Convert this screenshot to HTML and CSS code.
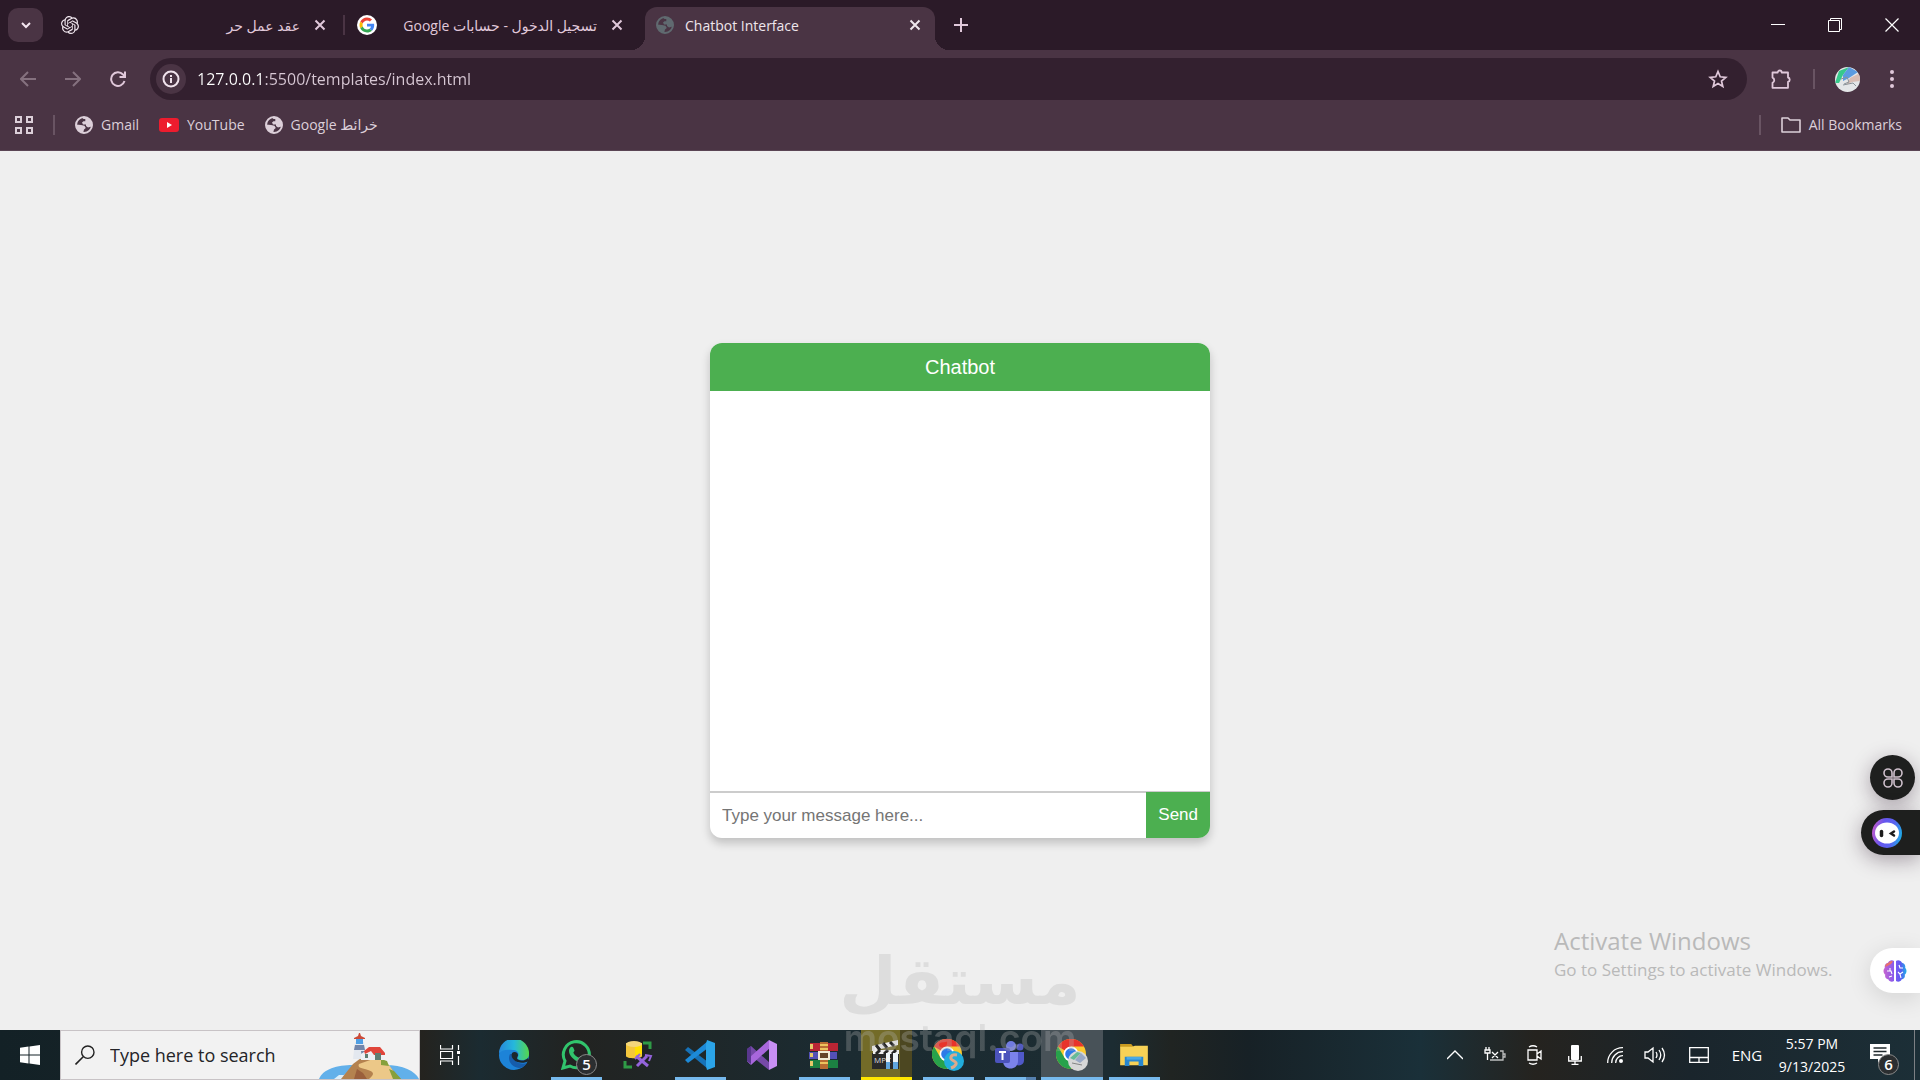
FILE: index.html
```
<!DOCTYPE html>
<html lang="en">
  <head>
    <meta charset="UTF-8" />
    <meta name="viewport" content="width=device-width, initial-scale=1.0" />
    <title>Chatbot Interface</title>
    <link rel="stylesheet" href="styles.css">
  </head>
  <body>
    <!-- shared symbols -->
    <svg class="defs" aria-hidden="true">
      <symbol id="close" viewBox="0 0 12 12">
        <path d="M1.5 1.5l9 9M10.5 1.5l-9 9" fill="none" stroke="currentColor" stroke-width="2" />
      </symbol>
      <symbol id="globe" viewBox="0 0 18 18">
        <circle cx="9" cy="9" r="8" fill="none" stroke="currentColor" stroke-width="2" />
        <path d="M8.500 1h3l5 4.500v5l-3.500 1-2-1.500V8.500H8L7 6.500l1.500-1.200h1.800V3H8zM1.200 8.500l4.800.5 3.500.8 1.300 2.200-1.800 1.500-.8 3.300L4 15.500 1 11z" fill="currentColor" />
      </symbol>
      <symbol id="chrome" viewBox="0 0 30 30">
        <circle cx="15" cy="15" r="15" fill="#fbc92e" />
        <path d="M15 15L2 7.500A15 15 0 0 1 28 7.500H15z" fill="#e8342b" />
        <path d="M2 7.500A15 15 0 0 0 15 30l6.500-11.200L8.500 18.800z" fill="#27a24b" />
        <circle cx="15" cy="15" r="7.500" fill="#fff" />
        <circle cx="15" cy="15" r="5.800" fill="#2d7be8" />
      </symbol>
    </svg>

    <header class="browser">
      <div class="tab-strip">
        <button class="tab-search" aria-label="Search tabs">
          <svg viewBox="0 0 12 12" width="12" height="12"><path d="M2 4l4 4 4-4" fill="none" stroke="currentColor" stroke-width="2" /></svg>
        </button>
        <div class="tab tab-first">
          <svg class="favicon" viewBox="0 0 24 24"><path fill="#f0e6ee" d="M22.2819 9.8211a5.9847 5.9847 0 0 0-.5157-4.9108 6.0462 6.0462 0 0 0-6.5098-2.9A6.0651 6.0651 0 0 0 4.9807 4.1818a5.9847 5.9847 0 0 0-3.9977 2.9 6.0462 6.0462 0 0 0 .7427 7.0966 5.98 5.98 0 0 0 .511 4.9107 6.051 6.051 0 0 0 6.5146 2.9001A5.9847 5.9847 0 0 0 13.2599 24a6.0557 6.0557 0 0 0 5.7718-4.2058 5.9894 5.9894 0 0 0 3.9977-2.9001 6.0557 6.0557 0 0 0-.7475-7.0729zm-9.022 12.6081a4.4755 4.4755 0 0 1-2.8764-1.0408l.1419-.0804 4.7783-2.7582a.7948.7948 0 0 0 .3927-.6813v-6.7369l2.02 1.1686a.071.071 0 0 1 .038.052v5.5826a4.504 4.504 0 0 1-4.4945 4.4944zm-9.6607-4.1254a4.4708 4.4708 0 0 1-.5346-3.0137l.142.0852 4.783 2.7582a.7712.7712 0 0 0 .7806 0l5.8428-3.3685v2.3324a.0804.0804 0 0 1-.0332.0615L9.74 19.9502a4.4992 4.4992 0 0 1-6.1408-1.6464zM2.3408 7.8956a4.485 4.485 0 0 1 2.3655-1.9728V11.6a.7664.7664 0 0 0 .3879.6765l5.8144 3.3543-2.0201 1.1685a.0757.0757 0 0 1-.071 0l-4.8303-2.7865A4.504 4.504 0 0 1 2.3408 7.872zm16.5963 3.8558L13.1038 8.364 15.1192 7.2a.0757.0757 0 0 1 .071 0l4.8303 2.7913a4.4944 4.4944 0 0 1-.6765 8.1042v-5.6772a.79.79 0 0 0-.407-.667zm2.0107-3.0231l-.142-.0852-4.7735-2.7818a.7759.7759 0 0 0-.7854 0L9.409 9.2297V6.8974a.0662.0662 0 0 1 .0284-.0615l4.8303-2.7866a4.4992 4.4992 0 0 1 6.6802 4.66zM8.3065 12.863l-2.02-1.1638a.0804.0804 0 0 1-.038-.0567V6.0742a4.4992 4.4992 0 0 1 7.3757-3.4537l-.142.0805L8.704 5.459a.7948.7948 0 0 0-.3927.6813zm1.0976-2.3654l2.602-1.4998 2.6069 1.4998v2.9994l-2.5974 1.4997-2.6067-1.4997Z" /></svg>
          <span class="tab-title" dir="rtl">عقد عمل حر</span>
          <button class="tab-close" aria-label="Close tab"><svg width="12" height="12"><use href="#close" /></svg></button>
        </div>
        <div class="tab tab-second">
          <svg class="favicon favicon-google" viewBox="-8 -8 64 64"><circle cx="24" cy="24" r="32" fill="#fff" /><path fill="#ea4335" d="M24 9.500c3.540 0 6.710 1.220 9.210 3.600l6.850-6.850C35.900 2.380 30.470 0 24 0 14.620 0 6.510 5.380 2.560 13.220l7.980 6.190C12.430 13.720 17.740 9.500 24 9.500z" /><path fill="#4285f4" d="M46.980 24.550c0-1.570-.15-3.090-.38-4.550H24v9.020h12.940c-.58 2.960-2.260 5.480-4.780 7.180l7.730 6c4.510-4.180 7.090-10.360 7.090-17.650z" /><path fill="#fbbc05" d="M10.530 28.590c-.48-1.450-.76-2.990-.76-4.590s.27-3.140.76-4.590l-7.980-6.190C.92 16.460 0 20.120 0 24c0 3.880.92 7.540 2.560 10.780l7.970-6.190z" /><path fill="#34a853" d="M24 48c6.480 0 11.930-2.130 15.890-5.810l-7.730-6c-2.150 1.450-4.920 2.300-8.160 2.300-6.260 0-11.570-4.220-13.470-9.910l-7.980 6.190C6.510 42.620 14.620 48 24 48z" /></svg>
          <span class="tab-title" dir="rtl">تسجيل الدخول - حسابات Google</span>
          <button class="tab-close" aria-label="Close tab"><svg width="12" height="12"><use href="#close" /></svg></button>
        </div>
        <div class="tab tab-active">
          <svg class="favicon favicon-dim"><use href="#globe" /></svg>
          <span class="tab-title">Chatbot Interface</span>
          <button class="tab-close" aria-label="Close tab"><svg width="12" height="12"><use href="#close" /></svg></button>
        </div>
        <button class="new-tab" aria-label="New tab">
          <svg viewBox="0 0 14 14" width="14" height="14"><path d="M7 0v14M0 7h14" stroke="currentColor" stroke-width="2" /></svg>
        </button>
        <div class="window-controls">
          <button aria-label="Minimize"><svg viewBox="0 0 14 14" width="14" height="14"><path d="M0 6.500h14" stroke="#fff" /></svg></button>
          <button aria-label="Restore"><svg viewBox="0 0 14 14" width="14" height="14"><path d="M.5 2.500h11v11H.5zM2.500 2.500v-2h11v11h-2" fill="none" stroke="#fff" /></svg></button>
          <button aria-label="Close"><svg viewBox="0 0 14 14" width="14" height="14"><path d="M.5.5l13 13M13.500.5l-13 13" stroke="#fff" stroke-width="1.200" /></svg></button>
        </div>
      </div>

      <div class="toolbar">
        <button class="nav-button disabled" aria-label="Back"><svg viewBox="0 0 16 16" width="16" height="16"><path d="M16 8H1.500M8 1L1 8l7 7" /></svg></button>
        <button class="nav-button disabled" aria-label="Forward"><svg viewBox="0 0 16 16" width="16" height="16"><path d="M0 8h14.500M8 1l7 7-7 7" /></svg></button>
        <button class="nav-button" aria-label="Reload"><svg viewBox="0 0 16 16" width="16" height="16"><path d="M14.500 10A6.800 6.800 0 1 1 13 3.500L15 6M15 .5V6H9.500" /></svg></button>
        <div class="omnibox">
          <button class="site-info" aria-label="Site information"><svg viewBox="0 0 18 18" width="18" height="18"><circle cx="9" cy="9" r="7.500" fill="none" stroke="currentColor" stroke-width="2" /><path d="M9 8v5M9 5v2" stroke="currentColor" stroke-width="2" /></svg></button>
          <input class="url" type="text" aria-label="Address" value="127.0.0.1:5500/templates/index.html" />
          <button class="star" aria-label="Bookmark this tab"><svg viewBox="0 0 20 20" width="20" height="20"><path d="M10 2.500l2.200 5.300 5.600.5-4.300 3.700 1.300 5.500-4.800-3-4.800 3 1.300-5.500-4.300-3.700 5.600-.5z" fill="none" stroke="currentColor" stroke-width="1.700" /></svg></button>
        </div>
        <button class="extensions" aria-label="Extensions"><svg viewBox="0 0 22 22" width="22" height="22"><path d="M2.500 4.500h5.200a2 2 0 0 1 4 0h6.300v5a2.200 2.200 0 0 1 0 4.300v6H2.500v-5a2.800 2.800 0 0 0 0-5.200z" fill="none" stroke="currentColor" stroke-width="1.800" stroke-linejoin="round" /></svg></button>
        <span class="divider"></span>
        <button class="profile" aria-label="Profile">
          <svg viewBox="0 0 25 25" width="25" height="25">
            <clipPath id="avatar"><circle cx="12.500" cy="12.500" r="12.500" /></clipPath>
            <g clip-path="url(#avatar)">
              <path d="M0 0h25v25H0z" fill="#e4e6e8" />
              <path d="M0 16L4 4l10-4L8 8l-4 8z" fill="#36c98b" />
              <path d="M8 8l6-8 9 5-9 6-6 3z" fill="#5b9be0" />
              <path d="M11 18l4-7 10-5v8l-8 1z" fill="#d9bdb4" />
              <path d="M6 12l6-2 2 5-5 2M8 18l10-2 3 3" fill="none" stroke="#8b9399" />
            </g>
          </svg>
        </button>
        <button class="menu" aria-label="Menu"><svg viewBox="0 0 4 18" width="4" height="18"><circle cx="2" cy="2" r="2" /><circle cx="2" cy="9" r="2" /><circle cx="2" cy="16" r="2" /></svg></button>
      </div>

      <nav class="bookmarks">
        <button class="apps" aria-label="Apps"><svg viewBox="0 0 18 18" width="18" height="18"><path d="M1 1h5v5H1zM12 1h5v5h-5zM1 12h5v5H1zM12 12h5v5h-5z" fill="none" stroke="currentColor" stroke-width="2" /></svg></button>
        <span class="divider"></span>
        <a href="#"><svg class="favicon"><use href="#globe" /></svg>Gmail</a>
        <a href="#"><svg viewBox="0 0 20 14" width="20" height="14"><rect width="20" height="14" rx="3" fill="#ed1c2e" /><path d="M8 4l5 3-5 3z" fill="#fff" /></svg>YouTube</a>
        <a href="#"><svg class="favicon"><use href="#globe" /></svg><span dir="rtl">خرائط Google</span></a>
        <div class="all-bookmarks">
          <span class="divider"></span>
          <a href="#"><svg viewBox="0 0 20 16" width="20" height="16"><path d="M1 1h6l2 2h10v12H1z" fill="none" stroke="currentColor" stroke-width="1.600" stroke-linejoin="round" /></svg>All Bookmarks</a>
        </div>
      </nav>
    </header>

    <main class="page">
      <div class="chat-container">
        <div class="chat-header">Chatbot</div>
        <div class="chat-box" id="chatBox"></div>
        <form class="chat-input">
          <input type="text" id="userInput" aria-label="Message" placeholder="Type your message here..." />
          <button type="submit">Send</button>
        </form>
      </div>

      <div class="activate">
        <p class="activate-title">Activate Windows</p>
        <p>Go to Settings to activate Windows.</p>
      </div>

      <div class="side-tools">
        <button class="side-round" aria-label="Tools"><svg viewBox="0 0 20 20" width="20" height="20"><path d="M9 9H5a4 4 0 1 1 4-4zM11 9V5a4 4 0 1 1 4 4zM9 11v4a4 4 0 1 1-4-4zM11 11h4a4 4 0 1 1-4 4z" fill="none" stroke="#cfc0cc" stroke-width="1.600" /></svg></button>
        <button class="side-pill" aria-label="Assistant">
          <svg viewBox="0 0 30 30" width="30" height="30">
            <linearGradient id="ring" x1="0" y1=".6" x2="1" y2=".8"><stop offset="0" stop-color="#b65bd0" /><stop offset=".3" stop-color="#6656ee" /><stop offset=".65" stop-color="#5863f0" /><stop offset="1" stop-color="#14b9e8" /></linearGradient>
            <circle cx="15" cy="15" r="15" fill="url(#ring)" />
            <ellipse cx="15" cy="15" rx="12" ry="10.500" fill="#fff" />
            <path d="M9.500 13.500v4" stroke="#1c1c1c" stroke-width="3.500" stroke-linecap="round" />
            <path d="M22 13.500l-3 2 3 2" fill="none" stroke="#1c1c1c" stroke-width="2.500" stroke-linecap="round" />
          </svg>
        </button>
      </div>
      <button class="brain" aria-label="Brain">
        <svg viewBox="0 0 24 22" width="24" height="22">
          <linearGradient id="mind"><stop offset="0" stop-color="#c764cf" /><stop offset=".5" stop-color="#8058f0" /><stop offset=".75" stop-color="#5b5bf0" /><stop offset="1" stop-color="#1eb2e8" /></linearGradient>
          <path d="M11 1v20c-2 1.500-5 .5-5.500-1.500C3 19 1.500 17 2.300 14.800 0 13 0 9.500 1.800 8 1.200 5 3 3 5 2.800 6 0 9.500-.5 11 1zM13 1v20c2 1.500 5 .5 5.500-1.500 2.500-.5 4-2.500 3.200-4.700 2.300-1.800 2.300-5.300.5-6.800.6-3-1.200-5-3.200-5.200C18 0 14.500-.5 13 1z" fill="url(#mind)" />
          <path d="M2.500 7C2 4.500 3.500 3.200 5.500 3 6.500 1 9 .3 10 1.500L8 4z" fill="#e8716a" />
          <path d="M4 11h4l1 3M7 8v3M16 5l1 3h3M15 12l2 2 1 4M17 14l3-2M6 17l3-1" fill="none" stroke="#fff" stroke-width="1.100" />
        </svg>
      </button>
    </main>

    <footer class="taskbar">
      <button class="start" aria-label="Start"><svg viewBox="0 0 20 20" width="20" height="20"><path d="M0 2.800l8.500-1.200v7.900H0zM9.500 1.500L20 0v9.500H9.500zM0 10.500h8.500v7.900L0 17.200zM9.500 10.500H20V20L9.500 18.500z" fill="#fff" /></svg></button>
      <div class="search">
        <svg viewBox="0 0 20 20" width="20" height="20"><circle cx="12.800" cy="7.200" r="6.200" fill="none" stroke="#222" stroke-width="1.400" /><path d="M8.200 11.800L.5 19.500" stroke="#222" stroke-width="1.600" /></svg>
        <input type="text" aria-label="Search" placeholder="Type here to search" />
        <svg class="lighthouse" viewBox="0 0 100 46" width="100" height="46">
          <path d="M0 46C4 36 18 32 34 32h32c18 0 30 6 34 14z" fill="#62b0ea" />
          <path d="M15 46l5-4h5l6-4 6 3v5z" fill="#dceefa" />
          <path d="M22 46L34 31l8-6h18l8 6 14 15z" fill="#b4824f" />
          <path d="M40 31l14-5h10l6 6 10 14H50c6-5 5-7-1-9s-11-2-9-6z" fill="#ecc888" />
          <path d="M62 26l6 2 2 5-8-1zM70 36l5 2 7 8h-8z" fill="#86a03c" />
          <path d="M35 46l3-10 6 4 4 6z" fill="#9a5f3c" />
          <path d="M36 9h9l2 17H34z" fill="#e3e8ef" />
          <path d="M36 12h9l1 5H35zM42 18h4l1 8h-4z" fill="#7386aa" />
          <path d="M35 5l4-2 1-3h1l1 3 4 2v1H35z" fill="#cb4b38" />
          <path d="M37 6h7v5h-7z" fill="#4f9fe4" />
          <path d="M42 21l6-4h12l5 5v5H42z" fill="#eef0f4" />
          <path d="M45 18l5-4h11l5 6v2H55l-3-4-6 3z" fill="#e0453a" />
          <path d="M56 20h6v7h-6zM46 21h3v4h-3z" fill="#5f7d72" />
        </svg>
      </div>
      <button class="task task-view" aria-label="Task View"><svg viewBox="0 0 20 20" width="20" height="20"><path d="M.5 0v4h12V0M.5 20v-4h12v4M.5 6.500h12v7H.5zM18.500 0v5M18.500 11v9" fill="none" stroke="#fff" stroke-width="1.200" /><path d="M17 6h3v3h-3z" fill="#fff" /></svg></button>

      <div class="apps-list">
        <button class="task" aria-label="Edge">
          <svg viewBox="0 0 30 30" width="30" height="30">
            <linearGradient id="edge-top"><stop offset="0" stop-color="#2788dc" /><stop offset=".5" stop-color="#25b8dc" /><stop offset="1" stop-color="#55d74c" /></linearGradient>
            <circle cx="15" cy="15" r="15" fill="#1d83d8" />
            <path d="M11 14c-3 6 1 13 9 14 3 0 6-2 8-5-3 1-7 1-10-1-4-2-5-5-4-8z" fill="#165cab" />
            <path d="M0 13A15 15 0 0 1 30 14c0 4-3 6-7 6-5 0-5-1.500-4-3 2-4-1-7-5-7C7 9 3 10 0 13z" fill="url(#edge-top)" />
            <path d="M13 13c2-2 6-1 6 2 0 2-2 3 0 4.500 3 2 8 1 10-1.500l1 3c-5 3-12 2-15-1-2-2-3-4-2-7z" fill="#1d262c" />
          </svg>
        </button>
        <button class="task running" aria-label="WhatsApp">
          <svg viewBox="0 0 30 30" width="30" height="30"><path d="M2 28l2-7A13 13 0 1 1 9 26z" fill="none" stroke="#31c46c" stroke-width="3" /><path d="M10 7c1-.5 2 0 2.500 1l1 2.500c0 1-1.500 1.500-1 2.500 1 2 3 4 5 4.500 1 0 1.500-1.500 2.500-1.500l3 1.500c1 2-1.500 4.500-4 4.500C13.500 21.500 7.500 15 8 10.500 8 9 9 7.500 10 7z" fill="#31c46c" /></svg>
          <span class="badge">5</span>
        </button>
        <button class="task" aria-label="Database tools">
          <svg viewBox="0 0 30 30" width="30" height="30"><path d="M20 3h7v6M2 21v6h7" fill="none" stroke="#2f9b46" stroke-width="3" /><path d="M3 3v13c0 3 16 3 16 0V3z" fill="#f4c73d" /><path d="M12 5h7v9l-7 4z" fill="#ffe000" /><ellipse cx="11" cy="4" rx="8" ry="3" fill="#f4d77c" /><path d="M14 26l10-10M13 16l12 10" stroke="#9464dc" stroke-width="3" /><path d="M22 15l6 1-2 5M12 19l5-5" fill="none" stroke="#9464dc" stroke-width="2" /></svg>
        </button>
        <button class="task running" aria-label="Visual Studio Code">
          <svg viewBox="0 0 30 30" width="30" height="30"><path d="M0 10l3-3 20 15v7z" fill="#1672b8" /><path d="M0 20l3 3L23 8V1z" fill="#1c8ad8" /><path d="M22 0l8 3v24l-8 3-1-4V4z" fill="#2ba4e8" /></svg>
        </button>
        <button class="task" aria-label="Visual Studio">
          <svg viewBox="0 0 30 30" width="30" height="30"><path d="M0 9l4-3 19 17-1 7L3 15v9l-3-3z" fill="#7649a8" /><path d="M0 21l4 4L23 8l-1-8L3 17z" fill="#a867dc" /><path d="M22 0l8 4v22l-8 4z" fill="#c88ff4" /><path d="M0 9l4-3v18l-4-3z" fill="#59378e" /></svg>
        </button>
        <button class="task running" aria-label="WinRAR">
          <svg viewBox="0 0 30 27" width="30" height="27"><path d="M1 1h28v8H1z" fill="#b92534" /><path d="M0 10h28v7H0z" fill="#5350b5" /><path d="M1 18h28v8H1z" fill="#1c8142" /><path d="M1 2h3v5H1zM1 11h3v4H1zM1 19h3v5H1z" fill="#e6c86a" /><path d="M11 0h8v27h-8z" fill="#b96c32" /><path d="M11 3h8M11 7h8M11 21h8" stroke="#ecc25d" stroke-width="2" /><path d="M10 10h10v7H10z" fill="#654328" stroke="#f1ead4" stroke-width="2" /></svg>
        </button>
        <button class="task attention" aria-label="Media player">
          <svg viewBox="0 0 30 30" width="30" height="30"><path d="M1 13h27v16H1z" fill="#292929" /><path d="M1 6L27 0v5L1 11zM2 10h26v4H2z" fill="#eee" /><path d="M5 5l4 5M12 3l4 5M19 2l4 4M5 14l4-4M13 14l4-4M21 14l4-4" stroke="#262626" stroke-width="3" /><text x="3" y="23" fill="#ddd" font-size="8">MPC</text><path d="M15 13h4v15h-4zM22 13h5v15h-5z" fill="#eef4f7" /><path d="M15 22h4v7h-4zM22 22h5v7h-5z" fill="#61a6dd" /></svg>
        </button>
        <button class="task running" aria-label="Chrome, profile S">
          <svg viewBox="0 0 32 32" width="32" height="32"><use href="#chrome" width="30" height="30" /><circle cx="22" cy="22" r="10" fill="#22addc" /><path d="M25 16c-7-1-8 4-3 6 4 2 2 5-3 7" fill="none" stroke="#dbaa8c" stroke-width="3" /></svg>
        </button>
        <button class="task running grouped" aria-label="Teams">
          <svg viewBox="0 0 30 28" width="30" height="28"><circle cx="16" cy="5" r="5" fill="#717be0" /><circle cx="25" cy="6" r="3.500" fill="#535bc0" /><path d="M20 11h9v8c0 5-5 7-9 4z" fill="#5059c9" /><path d="M8 11h15v9c0 10-15 10-15 0z" fill="#7b83eb" /><rect y="7" width="15" height="15" rx="2" fill="#4b53bc" /><path d="M4 11h7M7.500 11v8" stroke="#fff" stroke-width="2" /></svg>
        </button>
        <button class="task running current" aria-label="Chrome">
          <svg viewBox="0 0 32 32" width="32" height="32"><use href="#chrome" width="30" height="30" /><circle cx="22" cy="22" r="10" fill="#d7d7d7" /><path d="M14 19l7-6 4 1-7 7z" fill="#65bb98" /><path d="M19 21l6-7 5 5-6 5z" fill="#98a8c5" /><path d="M16 24l10 2" stroke="#858585" /></svg>
        </button>
        <button class="task running" aria-label="File Explorer">
          <svg viewBox="0 0 30 26" width="28" height="24"><path d="M0 1h12l3 4H0z" fill="#c99a20" /><path d="M0 4h13l3-1h14v21H0z" fill="#f7d156" /><path d="M5 15h20v10h-5v-5h-10v5H5z" fill="#2887cf" /><path d="M7 15h16v3H7z" fill="#49a9e6" /></svg>
        </button>
      </div>

      <div class="tray">
        <button aria-label="Show hidden icons"><svg viewBox="0 0 16 10" width="16" height="10"><path d="M0 9l8-8 8 8" /></svg></button>
        <button aria-label="Battery"><svg viewBox="0 0 22 16" width="22" height="16"><path d="M16 4h3v9H6M19 7h2v3h-2" opacity=".7" /><path d="M2 0v3M5 0v3M1 3h5v3H1zM3.500 6v7M8 5l6 6M14 5l-6 6" /></svg></button>
        <button aria-label="Meet now"><svg viewBox="0 0 16 20" width="16" height="20"><path d="M1 5h9v10H1zM10 9l4-3v8l-4-3M2 2q4-2.500 8 0M2 18q4 2.500 8 0" /></svg></button>
        <button aria-label="Microphone"><svg viewBox="0 0 14 20" width="14" height="20"><rect x="3" width="8" height="15" rx="1" fill="#fff" /><path d="M.7 11v5h12.600v-5M7 16v3M3.500 19.300h7" /></svg></button>
        <button aria-label="Wi-Fi"><svg viewBox="0 0 16 16" width="16" height="16"><path d="M.7 16A15 15 0 0 1 16 .7M4.700 16A11 11 0 0 1 16 4.700M8.700 16A7 7 0 0 1 16 8.700" /><circle cx="14" cy="14" r="2" fill="#fff" stroke="none" /></svg></button>
        <button aria-label="Volume"><svg viewBox="0 0 22 18" width="22" height="18"><path d="M1 6h3l5-4v14l-5-4H1zM12 6q2 3 0 6M15 4q3.500 5 0 10M18 2q5 7 0 14" /></svg></button>
        <button aria-label="Touchpad"><svg viewBox="0 0 20 16" width="20" height="16"><path d="M.7.7h18.600v14.600H.7zM.7 10.500h18.600M10 10.500v5" /></svg></button>
        <button>ENG</button>
        <button class="clock"><span>5:57 PM</span><span>9/13/2025</span></button>
        <button class="notices" aria-label="Notifications"><svg viewBox="0 0 20 20" width="20" height="20"><path d="M0 0h20v15h-8l-4 4v-4H0z" class="bubble" /><path d="M3.500 4h13M3.500 7.500h13M3.500 11h9" class="dark-line" /></svg><span class="badge">6</span></button>
      </div>
    </footer>

    <div class="watermark" aria-hidden="true">
      <span class="watermark-ar" lang="ar" dir="rtl">مستقل</span>
      <span class="watermark-en">mostaql.com</span>
    </div>
  </body>
</html>
```

FILE: styles.css
```
* {
  box-sizing: border-box;
}
body {
  margin: 0;
  height: 100vh;
  display: flex;
  flex-direction: column;
  position: relative;
  overflow: hidden;
  font-family: "Open Sans", "DejaVu Sans", sans-serif;
  background-color: #efefef;
}
button,
input {
  font-family: inherit;
  border: none;
  outline: none;
  padding: 0;
  background: none;
  color: inherit;
}
button {
  display: flex;
  align-items: center;
  justify-content: center;
  flex-shrink: 0;
  cursor: pointer;
}
a {
  color: inherit;
  text-decoration: none;
}
svg {
  flex-shrink: 0;
}
.defs {
  position: absolute;
  width: 0;
  height: 0;
}

/* browser window */
.browser {
  background-color: #4a3444;
  color: #e0c8da;
  border-bottom: 1px solid #5a4554;
}
.tab-strip {
  height: 50px;
  display: flex;
  align-items: center;
  background-color: #2b1a28;
  padding-left: 8px;
}
.tab-search {
  width: 35px;
  height: 34px;
  border-radius: 10px;
  background-color: #4a3444;
  color: #f4e6f0;
}
.tab {
  display: flex;
  align-items: center;
  height: 30px;
  font-size: 14px;
  gap: 14px;
}
.tab-title {
  flex: 1;
  min-width: 0;
  white-space: nowrap;
}
.tab-first {
  width: 284px;
  height: 20px;
  margin-left: 18px;
  padding-right: 17px;
  border-right: 2px solid #4a3444;
}
.tab-second {
  width: 300px;
  padding: 0 22px 0 12px;
}
.tab-active {
  position: relative;
  align-self: flex-end;
  width: 290px;
  height: 43px;
  padding: 0 14px 7px 11px;
  gap: 11px;
  border-radius: 12px 12px 0 0;
  background-color: #4a3444;
  color: #eee6ec;
}
.tab-active::before,
.tab-active::after {
  content: "";
  position: absolute;
  bottom: 0;
  width: 14px;
  height: 14px;
}
.tab-active::before {
  right: 100%;
  background: radial-gradient(circle at 0 0, transparent 14px, #4a3444 14px);
}
.tab-active::after {
  left: 100%;
  background: radial-gradient(circle at 100% 0, transparent 14px, #4a3444 14px);
}
.favicon {
  width: 18px;
  height: 18px;
}
.favicon-google {
  width: 20px;
  height: 20px;
}
.favicon-dim {
  color: #606a70;
}
.new-tab {
  width: 34px;
  height: 34px;
  margin-left: 9px;
}
.window-controls {
  display: flex;
  margin-left: auto;
}
.window-controls button {
  width: 57px;
  height: 50px;
}
.toolbar {
  display: flex;
  align-items: center;
  padding: 8px 14px 0 5px;
}
.nav-button {
  width: 45px;
  height: 42px;
}
.nav-button path {
  fill: none;
  stroke: currentColor;
  stroke-width: 2;
}
.disabled {
  color: #85717f;
}
.omnibox {
  flex: 1;
  display: flex;
  align-items: center;
  height: 42px;
  margin-left: 10px;
  padding: 0 19px 0 6px;
  border-radius: 21px;
  background-color: #33202f;
}
.site-info {
  width: 30px;
  height: 30px;
  border-radius: 50%;
  background-color: #4a3444;
  color: #f0e2ec;
}
/* host part is brighter than the path */
.url {
  flex: 1;
  margin-left: 11px;
  font-size: 16px;
  color: transparent;
  background: linear-gradient(to right, #fff 67px, #d8c8d5 67px);
  background-clip: text;
  -webkit-background-clip: text;
}
.extensions {
  width: 34px;
  margin-left: 17px;
}
.divider {
  width: 2px;
  height: 20px;
  background-color: #695463;
}
.toolbar .divider {
  margin-left: 15px;
}
.profile {
  width: 25px;
  margin-left: 20px;
}
.menu {
  width: 28px;
  margin-left: 18px;
}
.menu circle {
  fill: currentColor;
}
.bookmarks {
  display: flex;
  align-items: center;
  height: 50px;
  padding: 0 18px 0 15px;
  gap: 20px;
  font-size: 14px;
  line-height: 18px;
  color: #dccfd9;
}
.bookmarks a {
  display: flex;
  align-items: center;
  gap: 8px;
}
.all-bookmarks {
  display: flex;
  align-items: center;
  gap: 20px;
  margin-left: auto;
}

/* chat page */
.page {
  flex: 1;
  min-height: 0;
  position: relative;
  display: flex;
  align-items: center;
  justify-content: center;
  background-color: #efefef;
  font-family: Arial, "Liberation Sans", sans-serif;
}
.chat-container {
  width: 500px;
  border-radius: 12px;
  overflow: hidden;
  background-color: #fff;
  box-shadow: 0 5px 10px rgba(0, 0, 0, 0.2);
}
.chat-header {
  padding: 12px;
  font-size: 20px;
  line-height: 24px;
  text-align: center;
  background-color: #4caf50;
  color: #fff;
}
.chat-box {
  height: 400px;
}
.chat-input {
  display: flex;
  height: 47px;
  border-top: 1px solid #ccc;
}
.chat-input input {
  flex: 1;
  padding: 0 12px;
  font-size: 17px;
  border-top: 1px solid #ccc;
}
.chat-input input::placeholder {
  color: #757575;
}
.chat-input button {
  padding: 0 12px;
  font-size: 17px;
  background-color: #4caf50;
  color: #fff;
}
.activate {
  position: absolute;
  right: 81px;
  bottom: 48px;
  width: 285px;
  font-family: "Open Sans", sans-serif;
  font-size: 17px;
  line-height: 24px;
  white-space: nowrap;
  color: #b9b9b9;
}
.activate p {
  margin: 0;
}
.activate .activate-title {
  font-size: 24px;
  line-height: 34px;
}
.side-tools {
  position: absolute;
  right: 0;
  bottom: 175px;
  display: flex;
  flex-direction: column;
  align-items: flex-end;
  gap: 10px;
}
.side-round,
.side-pill {
  height: 45px;
  background-color: #1e1f1e;
  box-shadow: 0 5px 20px rgba(60, 40, 60, 0.4);
}
.side-round {
  width: 45px;
  margin-right: 5px;
  border-radius: 50%;
}
.side-pill {
  width: 59px;
  padding-right: 7px;
  border-radius: 23px 0 0 23px;
}
.brain {
  position: absolute;
  right: 0;
  bottom: 37px;
  width: 50px;
  height: 45px;
  border-radius: 23px 0 0 23px;
  background-color: #fff;
  box-shadow: 0 5px 25px rgba(0, 0, 0, 0.12);
}

/* windows taskbar */
.taskbar {
  display: flex;
  height: 50px;
  background: linear-gradient(to right, #132126, #1b262a 20%, #24231f 22%, #1b2b31 25%, #222321 30%, #1b2b31 43%, #1c2c32 58%, #202422 61%, #172126 65%, #1a3039 74%, #25231f 80%, #1a252c 88%, #1c2f37);
  color: #fff;
}
.start {
  width: 60px;
}
.search {
  position: relative;
  display: flex;
  align-items: center;
  width: 360px;
  padding-left: 14px;
  gap: 15px;
  border: 1px solid #c8c3c6;
  background-color: #f2f2f2;
  color: #222;
}
.search input {
  flex: 1;
  min-width: 0;
  font-size: 18px;
}
.search input::placeholder {
  color: #242428;
}
.lighthouse {
  position: absolute;
  right: 0;
  bottom: 0;
}
.apps-list {
  display: flex;
}
.task {
  position: relative;
  width: 62px;
  height: 50px;
}
.task-view {
  width: 60px;
  margin-right: 3px;
}
.running::after,
.attention::after {
  content: "";
  position: absolute;
  left: 6px;
  right: 5px;
  bottom: 0;
  height: 3px;
  background-color: #76b9ed;
}
.attention::before {
  content: "";
  position: absolute;
  z-index: -1;
  left: 6px;
  right: 5px;
  top: 0;
  bottom: 0;
  background: linear-gradient(to right, #736b28 76%, #4c4721 76%);
}
.attention {
  z-index: 0;
}
.attention::after {
  background-color: #ffe600;
}
.grouped::after {
  background: linear-gradient(to right, #76b9ed 80%, #5580ae 80%);
}
.current {
  background-color: #485258;
}
.current::after {
  left: 0;
  right: 0;
}
.badge {
  position: absolute;
  left: 31px;
  bottom: 5px;
  width: 21px;
  height: 21px;
  border: 1px solid #8a8a8a;
  border-radius: 50%;
  background-color: #2b2e30;
  color: #fff;
  font-size: 15px;
  font-weight: 600;
  line-height: 19px;
  text-align: center;
}
.tray {
  display: flex;
  margin-left: auto;
  margin-right: 5px;
  border-right: 1px solid #7c8084;
  padding-right: 8px;
}
.tray button {
  width: 40px;
  height: 50px;
  font-size: 15px;
}
.tray path {
  fill: none;
  stroke: #fff;
  stroke-width: 1.3;
}
.tray .bubble {
  fill: #fff;
  stroke: none;
}
.tray .dark-line {
  stroke: #20292d;
}
.tray button:nth-child(7),
.tray button:nth-child(8) {
  width: 48px;
}
.tray .clock {
  width: 82px;
  flex-direction: column;
  font-size: 14px;
  line-height: 23px;
}
.tray .notices {
  position: relative;
  width: 53px;
  padding-bottom: 3px;
}
.notices .badge {
  left: 25px;
}

/* watermark laid over the page and taskbar */
.watermark {
  position: absolute;
  left: 0;
  right: 0;
  bottom: 24px;
  display: flex;
  flex-direction: column;
  align-items: center;
  color: #b4b4b4;
  opacity: 0.3;
  pointer-events: none;
}
.watermark-ar {
  font-family: "DejaVu Sans", sans-serif;
  font-size: 66px;
  font-weight: bold;
  line-height: 76px;
}
.watermark-en {
  font-family: Inter, sans-serif;
  font-size: 37px;
  font-weight: 600;
  line-height: 36px;
}
```
